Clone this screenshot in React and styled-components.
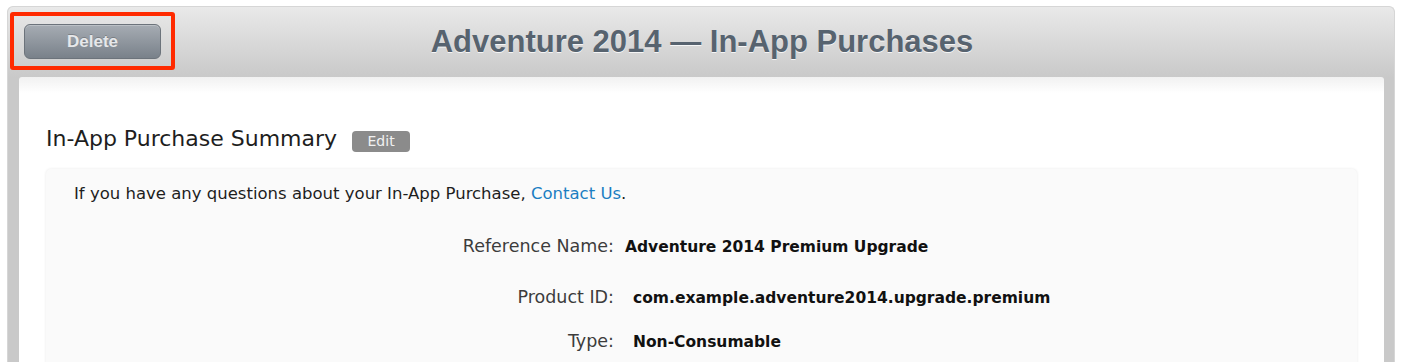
import React from "react";
import styled, { createGlobalStyle } from "styled-components";

const Global = createGlobalStyle`
  html, body { margin: 0; padding: 0; background: #ffffff; }
  body { font-family: "DejaVu Sans", "Liberation Sans", sans-serif; }
`;

const Page = styled.div`
  padding: 6px 7px 0 7px;
  height: 356px;
  overflow: hidden;
`;

const Frame = styled.div`
  border: 1px solid #d6d6d6;
  border-bottom: none;
  border-radius: 6px 6px 0 0;
  background: #c9c9c9;
  height: 100%;
  display: flex;
  flex-direction: column;
`;

const Header = styled.div`
  flex-shrink: 0;
  height: 70px;
  display: grid;
  grid-template-columns: 1fr auto 1fr;
  align-items: start;
  border-radius: 5px 5px 0 0;
  background: linear-gradient(#e9e9e9, #c9c9c9);
  box-sizing: border-box;
  padding: 5px 0 0 2px;
`;

const Highlight = styled.div`
  justify-self: start;
  border: 4px solid #ff2a00;
  border-radius: 3px;
  padding: 8px 10px 7px 10px;
  display: flex;
`;

const DeleteButton = styled.button`
  width: 137px;
  height: 35px;
  border: 1px solid #6c737b;
  border-radius: 6px;
  background: linear-gradient(#a6acb3, #79818a);
  box-shadow: inset 0 1px 0 rgba(255, 255, 255, 0.25);
  color: #e6e8ea;
  font-family: "Liberation Sans", Arial, sans-serif;
  font-weight: bold;
  font-size: 17px;
  text-shadow: 0 -1px 0 rgba(0, 0, 0, 0.2);
  padding: 0;
`;

const Title = styled.h1`
  margin: 0;
  padding-top: 12px;
  font-family: "Liberation Sans", Arial, sans-serif;
  font-weight: bold;
  font-size: 31px;
  line-height: 36px;
  color: #57636f;
  text-shadow: 0 1px 0 rgba(255, 255, 255, 0.8);
  white-space: nowrap;
`;

const Panel = styled.div`
  flex: 1;
  min-height: 0;
  margin: 0 10px 0 11px;
  background: linear-gradient(#f1f1f1, #ffffff 16px);
  border-radius: 3px 3px 0 0;
  padding: 49px 27px 0 27px;
`;

const SectionHead = styled.div`
  display: flex;
  align-items: center;
  gap: 15px;
  margin-bottom: 17px;
`;

const SectionTitle = styled.h2`
  margin: 0;
  font-weight: normal;
  font-size: 22px;
  color: #1e1e1e;
  line-height: 26px;
`;

const Badge = styled.span`
  display: inline-flex;
  align-items: center;
  justify-content: center;
  margin-top: 4px;
  width: 58px;
  height: 21px;
  border-radius: 4px;
  background: #8b8b8b;
  color: #f1f1f1;
  font-size: 14px;
`;

const Box = styled.div`
  background: #fafafa;
  border-radius: 5px 5px 0 0;
  box-shadow: 0 0 3px rgba(0, 0, 0, 0.09);
  padding: 15px 28px 0 28px;
  height: 300px;
`;

const Note = styled.p`
  margin: 0 0 32px 0;
  font-size: 16.5px;
  color: #1e1e1e;
  line-height: 20px;
`;

const Link = styled.a`
  color: #1b7ec2;
  text-decoration: none;
`;

const Rows = styled.div`
  display: flex;
  flex-direction: column;
`;

const Row = styled.div`
  display: grid;
  grid-template-columns: 540px auto;
  column-gap: ${(p) => p.$gap}px;
  align-items: baseline;
  height: ${(p) => p.$h}px;
`;

const Label = styled.span`
  text-align: right;
  font-size: 17.5px;
  color: #3c3c3c;
`;

const Value = styled.span`
  font-size: 15.5px;
  font-weight: bold;
  color: #111;
`;

const rows = [
  { label: "Reference Name:", value: "Adventure 2014 Premium Upgrade", gap: 11, h: 51 },
  { label: "Product ID:", value: "com.example.adventure2014.upgrade.premium", gap: 19, h: 44 },
  { label: "Type:", value: "Non-Consumable", gap: 19, h: 44 },
];

export default function App() {
  return (
    <>
      <Global />
      <Page>
        <Frame>
          <Header>
            <Highlight>
              <DeleteButton>Delete</DeleteButton>
            </Highlight>
            <Title>Adventure 2014 — In-App Purchases</Title>
            <div />
          </Header>
          <Panel>
            <SectionHead>
              <SectionTitle>In-App Purchase Summary</SectionTitle>
              <Badge>Edit</Badge>
            </SectionHead>
            <Box>
              <Note>
                If you have any questions about your In-App Purchase, <Link href="#">Contact Us</Link>.
              </Note>
              <Rows>
                {rows.map((r) => (
                  <Row key={r.label} $gap={r.gap} $h={r.h}>
                    <Label>{r.label}</Label>
                    <Value>{r.value}</Value>
                  </Row>
                ))}
              </Rows>
            </Box>
          </Panel>
        </Frame>
      </Page>
    </>
  );
}
